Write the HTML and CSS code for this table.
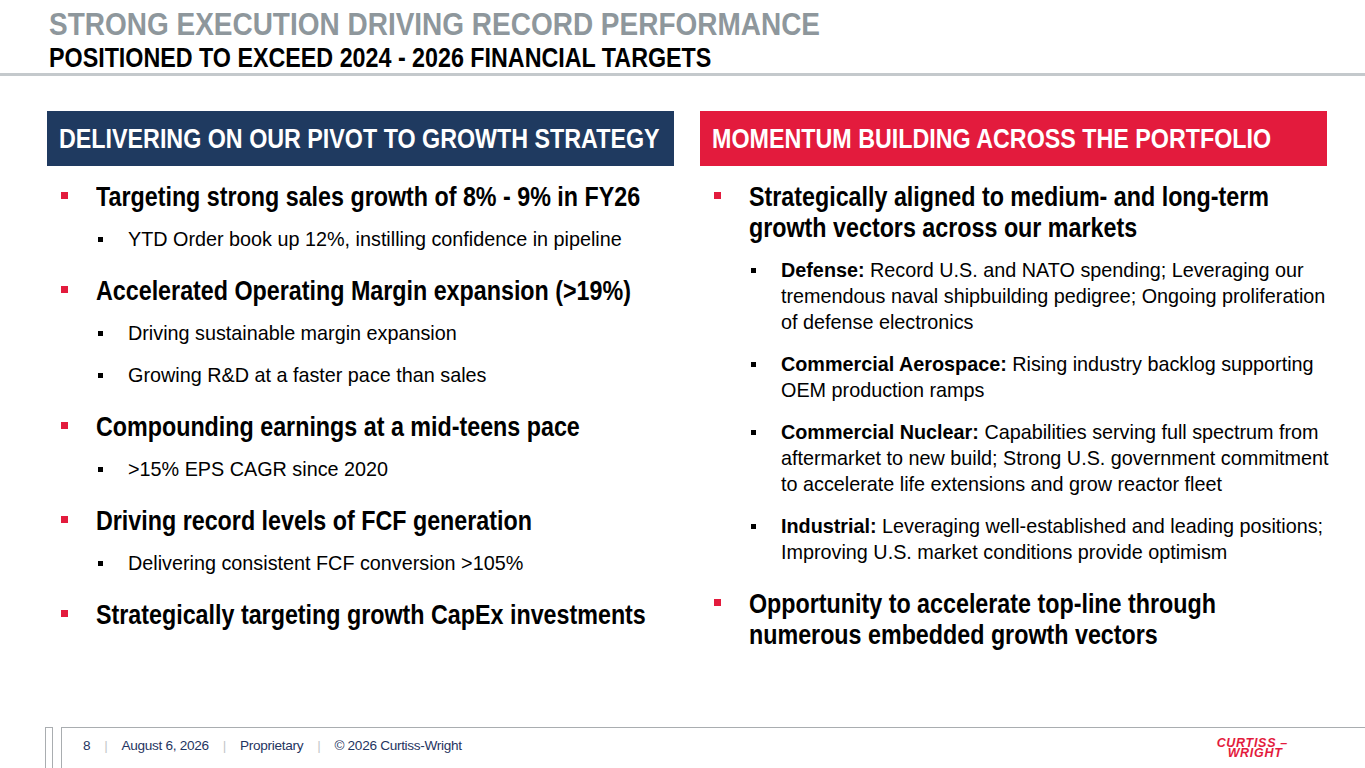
FILE: index.html
```html
<!DOCTYPE html>
<html lang="en">
<head>
<meta charset="utf-8">
<title>Strong Execution Driving Record Performance</title>
<link rel="stylesheet" href="styles.css">
</head>
<body>
<div class="slide">
  <header class="head">
    <h1 class="title"><span class="sx-title">STRONG EXECUTION DRIVING RECORD PERFORMANCE</span></h1>
    <h2 class="subtitle"><span class="sx">POSITIONED TO EXCEED 2024 - 2026 FINANCIAL TARGETS</span></h2>
  </header>
  <div class="rule"></div>

  <main class="cols">
    <section class="col">
      <div class="banner navy"><span class="sx">DELIVERING ON OUR PIVOT TO GROWTH STRATEGY</span></div>
      <div class="list">
        <div class="l1">
          <div class="l1-row"><span class="sq"></span><p class="sx">Targeting strong sales growth of 8% - 9% in FY26</p></div>
          <div class="subs">
            <div class="l2"><span class="dot"></span><p>YTD Order book up 12%, instilling confidence in pipeline</p></div>
          </div>
        </div>
        <div class="l1">
          <div class="l1-row"><span class="sq"></span><p class="sx">Accelerated Operating Margin expansion (&gt;19%)</p></div>
          <div class="subs">
            <div class="l2"><span class="dot"></span><p>Driving sustainable margin expansion</p></div>
            <div class="l2"><span class="dot"></span><p>Growing R&amp;D at a faster pace than sales</p></div>
          </div>
        </div>
        <div class="l1">
          <div class="l1-row"><span class="sq"></span><p class="sx">Compounding earnings at a mid-teens pace</p></div>
          <div class="subs">
            <div class="l2"><span class="dot"></span><p>&gt;15% EPS CAGR since 2020</p></div>
          </div>
        </div>
        <div class="l1">
          <div class="l1-row"><span class="sq"></span><p class="sx">Driving record levels of FCF generation</p></div>
          <div class="subs">
            <div class="l2"><span class="dot"></span><p>Delivering consistent FCF conversion &gt;105%</p></div>
          </div>
        </div>
        <div class="l1">
          <div class="l1-row"><span class="sq"></span><p class="sx">Strategically targeting growth CapEx investments</p></div>
        </div>
      </div>
    </section>

    <section class="col">
      <div class="banner red"><span class="sx">MOMENTUM BUILDING ACROSS THE PORTFOLIO</span></div>
      <div class="list">
        <div class="l1">
          <div class="l1-row"><span class="sq"></span><p class="sx">Strategically aligned to medium- and long-term<br>growth vectors across our markets</p></div>
          <div class="subs">
            <div class="l2"><span class="dot"></span><p><b>Defense:</b> Record U.S. and NATO spending; Leveraging our<br>tremendous naval shipbuilding pedigree; Ongoing proliferation<br>of defense electronics</p></div>
            <div class="l2"><span class="dot"></span><p><b>Commercial Aerospace:</b> Rising industry backlog supporting<br>OEM production ramps</p></div>
            <div class="l2"><span class="dot"></span><p><b>Commercial Nuclear:</b> Capabilities serving full spectrum from<br>aftermarket to new build; Strong U.S. government commitment<br>to accelerate life extensions and grow reactor fleet</p></div>
            <div class="l2"><span class="dot"></span><p><b>Industrial:</b> Leveraging well-established and leading positions;<br>Improving U.S. market conditions provide optimism</p></div>
          </div>
        </div>
        <div class="l1">
          <div class="l1-row"><span class="sq"></span><p class="sx">Opportunity to accelerate top-line through<br>numerous embedded growth vectors</p></div>
        </div>
      </div>
    </section>
  </main>

  <footer class="foot">
    <div class="foot-box"></div>
    <div class="foot-main">
      <div class="foot-text">
        <span>8</span><span class="sep">|</span><span>August 6, 2026</span><span class="sep">|</span><span>Proprietary</span><span class="sep">|</span><span>© 2026 Curtiss-Wright</span>
      </div>
      <div class="logo">
        <span class="logo-l1">CURTISS –</span>
        <span class="logo-l2">WRIGHT</span>
      </div>
    </div>
  </footer>
</div>
</body>
</html>
```

FILE: styles.css
```css
* { box-sizing: border-box; }

html, body {
  margin: 0;
  padding: 0;
  background: #ffffff;
}

body {
  font-family: "Liberation Sans", Arial, sans-serif;
  color: #000000;
}

.slide {
  width: 1365px;
  height: 768px;
  overflow: hidden;
  display: flex;
  flex-direction: column;
}

/* horizontally condensed text (Arial Narrow look) */
.sx {
  display: inline-block;
  transform: scaleX(0.82);
  transform-origin: left center;
  white-space: nowrap;
}

.sx-title {
  display: inline-block;
  transform: scaleX(0.894);
  transform-origin: left center;
  white-space: nowrap;
}

.head {
  padding: 7px 0 0 49px;
}

.title {
  margin: 0;
  font-size: 31.3px;
  line-height: 35px;
  font-weight: bold;
  color: #8e979c;
  white-space: nowrap;
}

.subtitle {
  margin: 0;
  font-size: 28.4px;
  line-height: 31px;
  font-weight: bold;
  color: #000000;
  white-space: nowrap;
}

.rule {
  height: 3px;
  background: #c4c9cc;
}

.cols {
  flex: 1;
  display: flex;
  gap: 26px;
  padding: 35px 0 0 47px;
}

.col {
  width: 627px;
  flex: none;
}

.banner {
  height: 55px;
  padding-left: 12px;
  display: flex;
  align-items: center;
  color: #ffffff;
  font-weight: bold;
  font-size: 28.4px;
  line-height: 31px;
  white-space: nowrap;
  overflow: hidden;
}

.navy { background: #1f3a60; }
.red  { background: #e31b3d; }

.list {
  padding-top: 14.5px;
}

.l1 + .l1 {
  margin-top: 22.5px;
}

.l1-row {
  display: flex;
  padding-left: 14px;
}

.l1-row p {
  margin: 0 0 0 28px;
  font-size: 28.4px;
  line-height: 31px;
  font-weight: bold;
}

.sq {
  flex: none;
  width: 7px;
  height: 7px;
  margin-top: 11px;
  background: #e31b3d;
}

.subs {
  margin-top: 14.5px;
  display: flex;
  flex-direction: column;
  gap: 16px;
}

.l2 {
  display: flex;
  padding-left: 51px;
}

.dot {
  flex: none;
  width: 5px;
  height: 5px;
  margin-top: 11px;
  background: #000000;
}

.l2 p {
  margin: 0 0 0 25px;
  font-size: 19.8px;
  line-height: 26px;
  white-space: nowrap;
}

.l2 b { font-weight: bold; }

.foot {
  height: 41px;
  flex: none;
  display: flex;
  padding-left: 45px;
}

.foot-box {
  width: 8px;
  border: 1px solid #a9adb0;
  border-bottom: none;
  margin-right: 8px;
}

.foot-main {
  flex: 1;
  border-top: 1px solid #a9adb0;
  border-left: 1px solid #a9adb0;
  display: flex;
  justify-content: space-between;
  padding: 0 77px 0 21px;
}

.foot-text {
  font-size: 13.6px;
  color: #1f3561;
  padding-top: 10px;
  letter-spacing: -0.3px;
  white-space: nowrap;
}

.sep {
  color: #c3c6c9;
  margin: 0 14px;
}

.logo {
  display: flex;
  flex-direction: column;
  padding-top: 11px;
  font-weight: bold;
  font-style: italic;
  color: #e31b3d;
  font-size: 12.5px;
  line-height: 9px;
  letter-spacing: 0.7px;
  white-space: nowrap;
}

.logo-l2 {
  padding-left: 11px;
  padding-top: 1px;
}
```
